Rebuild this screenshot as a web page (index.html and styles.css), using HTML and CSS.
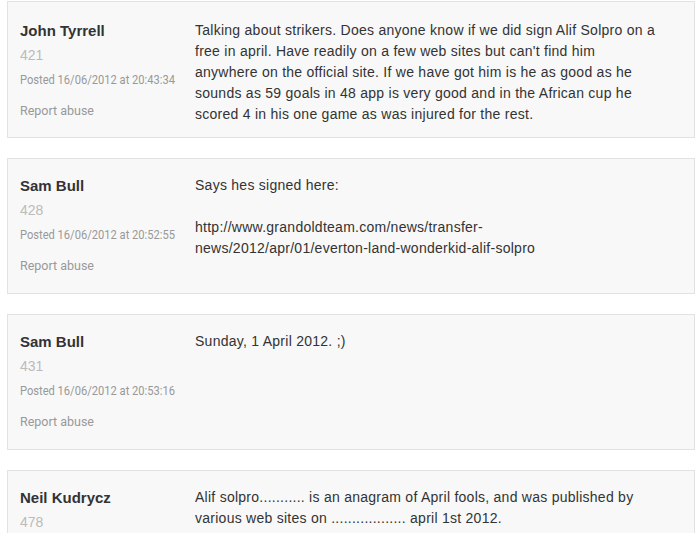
FILE: index.html
```html
<!DOCTYPE html>
<html lang="en">
<head>
<meta charset="utf-8">
<title>Comments</title>
<link rel="stylesheet" href="styles.css">
</head>
<body>
<div class="comments">
  <div class="comment first">
    <div class="meta">
      <div class="author">John Tyrrell</div>
      <div class="num">421</div>
      <div class="posted"><span class="posted-in">Posted 16/06/2012 at 20:43:34</span></div>
      <div class="report">Report abuse</div>
    </div>
    <div class="text">Talking about strikers. Does anyone know if we did sign Alif Solpro on a free in april. Have readily on a few web sites but can't find him anywhere on the official site. If we have got him is he as good as he sounds as 59 goals in 48 app is very good and in the African cup he scored 4 in his one game as was injured for the rest.</div>
  </div>
  <div class="comment">
    <div class="meta">
      <div class="author">Sam Bull</div>
      <div class="num">428</div>
      <div class="posted"><span class="posted-in">Posted 16/06/2012 at 20:52:55</span></div>
      <div class="report">Report abuse</div>
    </div>
    <div class="text">Says hes signed here:<br><br>http://www.grandoldteam.com/news/transfer-<br>news/2012/apr/01/everton-land-wonderkid-alif-solpro</div>
  </div>
  <div class="comment">
    <div class="meta">
      <div class="author">Sam Bull</div>
      <div class="num">431</div>
      <div class="posted"><span class="posted-in">Posted 16/06/2012 at 20:53:16</span></div>
      <div class="report">Report abuse</div>
    </div>
    <div class="text">Sunday, 1 April 2012. ;)</div>
  </div>
  <div class="comment">
    <div class="meta">
      <div class="author">Neil Kudrycz</div>
      <div class="num">478</div>
      <div class="posted"><span class="posted-in">Posted 16/06/2012 at 21:47:09</span></div>
      <div class="report">Report abuse</div>
    </div>
    <div class="text">Alif solpro........... is an anagram of April fools, and was published by various web sites on .................. april 1st 2012.</div>
  </div>
</div>
</body>
</html>
```
FILE: styles.css
```css
html, body {
  margin: 0;
  background: #ffffff;
}
body {
  padding: 1px 3px 0 7px;
  font-family: "Liberation Sans", Arial, sans-serif;
  color: #333333;
}
.comments {
  display: flex;
  flex-direction: column;
  gap: 20px;
}
.comment {
  display: flex;
  align-items: flex-start;
  background: #f8f8f8;
  border: 1px solid #e2e2e2;
  padding: 16px 12px 14px 12px;
}
.comment.first {
  padding-top: 18px;
  padding-bottom: 12px;
}
.meta {
  width: 175px;
  flex: none;
  padding-bottom: 4px;
}
.author {
  font-weight: bold;
  font-size: 15px;
  line-height: 21px;
  color: #333333;
}
.num {
  font-size: 14px;
  line-height: 20px;
  margin-top: 4px;
  color: #bbbbbb;
}
.posted {
  font-family: "Roboto", "Liberation Sans", sans-serif;
  font-size: 13px;
  line-height: 18px;
  margin-top: 6px;
  color: #999999;
  white-space: nowrap;
}
.posted-in {
  display: inline-block;
  transform: scaleX(0.856);
  transform-origin: 0 0;
}
.report {
  font-family: "Roboto", "Liberation Sans", sans-serif;
  font-size: 12.5px;
  line-height: 18px;
  margin-top: 13px;
  color: #999999;
}
.text {
  width: 465px;
  font-size: 14px;
  line-height: 21px;
  letter-spacing: 0.26px;
  color: #333333;
  word-wrap: break-word;
}
```
